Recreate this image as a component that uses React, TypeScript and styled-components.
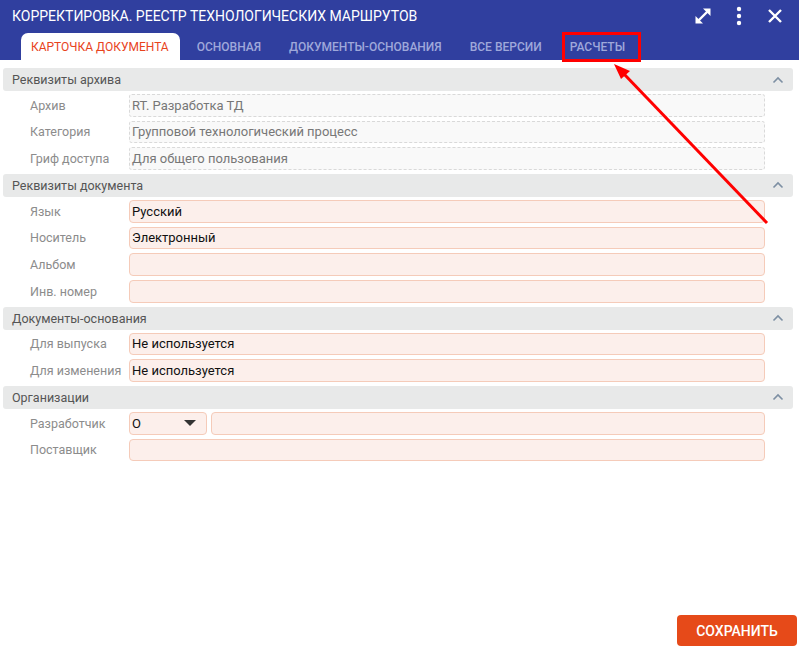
import React from "react";
import styled, { createGlobalStyle } from "styled-components";

const Global = createGlobalStyle`
  html, body { margin: 0; padding: 0; background: #fff; }
  body { font-family: Roboto, "Noto Sans", Arial, sans-serif; }
  * { box-sizing: border-box; }
`;

const Page = styled.div`
  position: relative;
  width: 799px;
  height: 649px;
  display: flex;
  flex-direction: column;
  background: #fff;
  overflow: hidden;
`;

const Header = styled.header`
  background: #303f9f;
  display: flex;
  flex-direction: column;
`;

const TitleRow = styled.div`
  height: 33px;
  display: flex;
  align-items: center;
  padding: 0 6px 2px 12px;
`;

const Title = styled.h1`
  flex: 1;
  margin: 0;
  color: #fff;
  font-size: 14px;
  font-weight: 400;
  letter-spacing: 0;
  white-space: nowrap;
`;

const IconButton = styled.button`
  width: 36px;
  height: 28px;
  border: 0;
  background: transparent;
  padding: 0;
  display: flex;
  align-items: center;
  justify-content: center;
  color: #fff;
`;

const TabBar = styled.nav`
  height: 27px;
  display: flex;
  align-items: stretch;
  padding-left: 21px;
`;

const Tab = styled.div<{ $active?: boolean }>`
  position: relative;
  display: flex;
  align-items: center;
  padding: ${(p) => (p.$active ? "1px 11px 0 10px" : "1px 14px 0")};
  margin-right: ${(p) => (p.$active ? "3px" : "0")};
  font-size: 12px;
  font-weight: ${(p) => (p.$active ? 400 : 500)};
  color: ${(p) => (p.$active ? "#e8431c" : "#9fa8da")};
  background: ${(p) => (p.$active ? "#fff" : "transparent")};
  border-radius: ${(p) => (p.$active ? "7px 7px 0 0" : "0")};
  white-space: nowrap;
`;

const Highlight = styled.div`
  position: absolute;
  left: 562px;
  top: 32px;
  width: 79px;
  height: 30px;
  border: 3px solid #ff0000;
  pointer-events: none;
`;

const ArrowSvg = styled.svg`
  position: absolute;
  left: 0;
  top: 0;
  pointer-events: none;
`;

const Content = styled.main`
  flex: 1;
  padding: 8px 6px 0 3px;
  display: flex;
  flex-direction: column;
`;

const SectionHeader = styled.div`
  height: 23px;
  background: #e8e9e9;
  border-radius: 3px;
  display: flex;
  align-items: center;
  justify-content: space-between;
  padding: 0 9px 0 9px;
  font-size: 12.5px;
  color: #555;
`;

const SectionBody = styled.div`
  display: flex;
  flex-direction: column;
  gap: 4px;
  padding: 3px 0 4px;
`;

const Row = styled.div`
  height: 22.67px;
  display: flex;
  align-items: center;
  gap: 4px;
  padding-right: 28px;
`;

const Label = styled.div`
  width: 122px;
  flex: none;
  padding-left: 27px;
  font-size: 12.5px;
  color: #8c8c8c;
  white-space: nowrap;
`;

const Field = styled.div<{ $readOnly?: boolean; $width?: number }>`
  ${(p) => (p.$width ? `width: ${p.$width}px; flex: none;` : "flex: 1;")}
  height: 100%;
  display: flex;
  align-items: center;
  justify-content: space-between;
  padding: 0 10px 0 2px;
  font-size: 13px;
  border-radius: ${(p) => (p.$readOnly ? "3px" : "4px")};
  border: 1px ${(p) => (p.$readOnly ? "dashed #d9d9d9" : "solid #f5cbb9")};
  background: ${(p) => (p.$readOnly ? "#f9f9f9" : "#fcefeb")};
  color: ${(p) => (p.$readOnly ? "#777" : "#111")};
  white-space: nowrap;
`;

const Caret = styled.span`
  width: 0;
  height: 0;
  border-left: 6px solid transparent;
  border-right: 6px solid transparent;
  border-top: 6px solid #333;
`;

const Footer = styled.footer`
  display: flex;
  justify-content: flex-end;
  padding: 0 2px 3px;
`;

const SaveButton = styled.button`
  width: 120px;
  height: 31px;
  border: 0;
  border-radius: 4px;
  background: #e64a19;
  color: #fff;
  font-family: Roboto, sans-serif;
  font-size: 14px;
  font-weight: 500;
  padding: 0;
`;

const Chevron = () => (
  <svg width="12" height="8" viewBox="0 0 12 8">
    <path d="M1.5 6.5 L6 2 L10.5 6.5" fill="none" stroke="#7d8fa3" strokeWidth="1.6" />
  </svg>
);

type RowDef = { label: string; value?: string; readOnly?: boolean; select?: string };

const sections: { title: string; rows: RowDef[] }[] = [
  {
    title: "Реквизиты архива",
    rows: [
      { label: "Архив", value: "RT. Разработка ТД", readOnly: true },
      { label: "Категория", value: "Групповой технологический процесс", readOnly: true },
      { label: "Гриф доступа", value: "Для общего пользования", readOnly: true },
    ],
  },
  {
    title: "Реквизиты документа",
    rows: [
      { label: "Язык", value: "Русский" },
      { label: "Носитель", value: "Электронный" },
      { label: "Альбом", value: "" },
      { label: "Инв. номер", value: "" },
    ],
  },
  {
    title: "Документы-основания",
    rows: [
      { label: "Для выпуска", value: "Не используется" },
      { label: "Для изменения", value: "Не используется" },
    ],
  },
  {
    title: "Организации",
    rows: [
      { label: "Разработчик", select: "О", value: "" },
      { label: "Поставщик", value: "" },
    ],
  },
];

const tabs = ["Карточка документа", "Основная", "Документы-основания", "Все версии", "Расчеты"];

export default function App() {
  return (
    <Page>
      <Global />
      <Header>
        <TitleRow>
          <Title>КОРРЕКТИРОВКА. РЕЕСТР ТЕХНОЛОГИЧЕСКИХ МАРШРУТОВ</Title>
          <IconButton aria-label="expand">
            <svg width="20" height="20" viewBox="0 0 20 20">
              <path d="M4 16 L16 4" stroke="#fff" strokeWidth="2.4" />
              <path d="M10 2.5 H17.5 V10 Z" fill="#fff" />
              <path d="M2.5 10 V17.5 H10 Z" fill="#fff" />
            </svg>
          </IconButton>
          <IconButton aria-label="menu">
            <svg width="6" height="20" viewBox="0 0 6 20">
              <circle cx="3" cy="3" r="2.2" fill="#fff" />
              <circle cx="3" cy="10" r="2.2" fill="#fff" />
              <circle cx="3" cy="17" r="2.2" fill="#fff" />
            </svg>
          </IconButton>
          <IconButton aria-label="close">
            <svg width="16" height="16" viewBox="0 0 16 16">
              <path d="M2 2 L14 14 M14 2 L2 14" stroke="#fff" strokeWidth="2.4" />
            </svg>
          </IconButton>
        </TitleRow>
        <TabBar>
          {tabs.map((t, i) => (
            <Tab key={t} $active={i === 0}>
              {t.toUpperCase()}
            </Tab>
          ))}
        </TabBar>
      </Header>
      <Content>
        {sections.map((s) => (
          <React.Fragment key={s.title}>
            <SectionHeader>
              <span>{s.title}</span>
              <Chevron />
            </SectionHeader>
            <SectionBody>
              {s.rows.map((r) => (
                <Row key={r.label}>
                  <Label>{r.label}</Label>
                  {r.select !== undefined && (
                    <Field $width={78}>
                      <span>{r.select}</span>
                      <Caret />
                    </Field>
                  )}
                  <Field $readOnly={r.readOnly}>{r.value}</Field>
                </Row>
              ))}
            </SectionBody>
          </React.Fragment>
        ))}
      </Content>
      <Footer>
        <SaveButton>СОХРАНИТЬ</SaveButton>
      </Footer>
      <Highlight />
      <ArrowSvg width="799" height="649" viewBox="0 0 799 649">
        <path d="M767 223 L624 74" stroke="#ff0000" strokeWidth="3" />
        <path d="M614 64 L630 71 L621 79 Z" fill="#ff0000" />
      </ArrowSvg>
    </Page>
  );
}
